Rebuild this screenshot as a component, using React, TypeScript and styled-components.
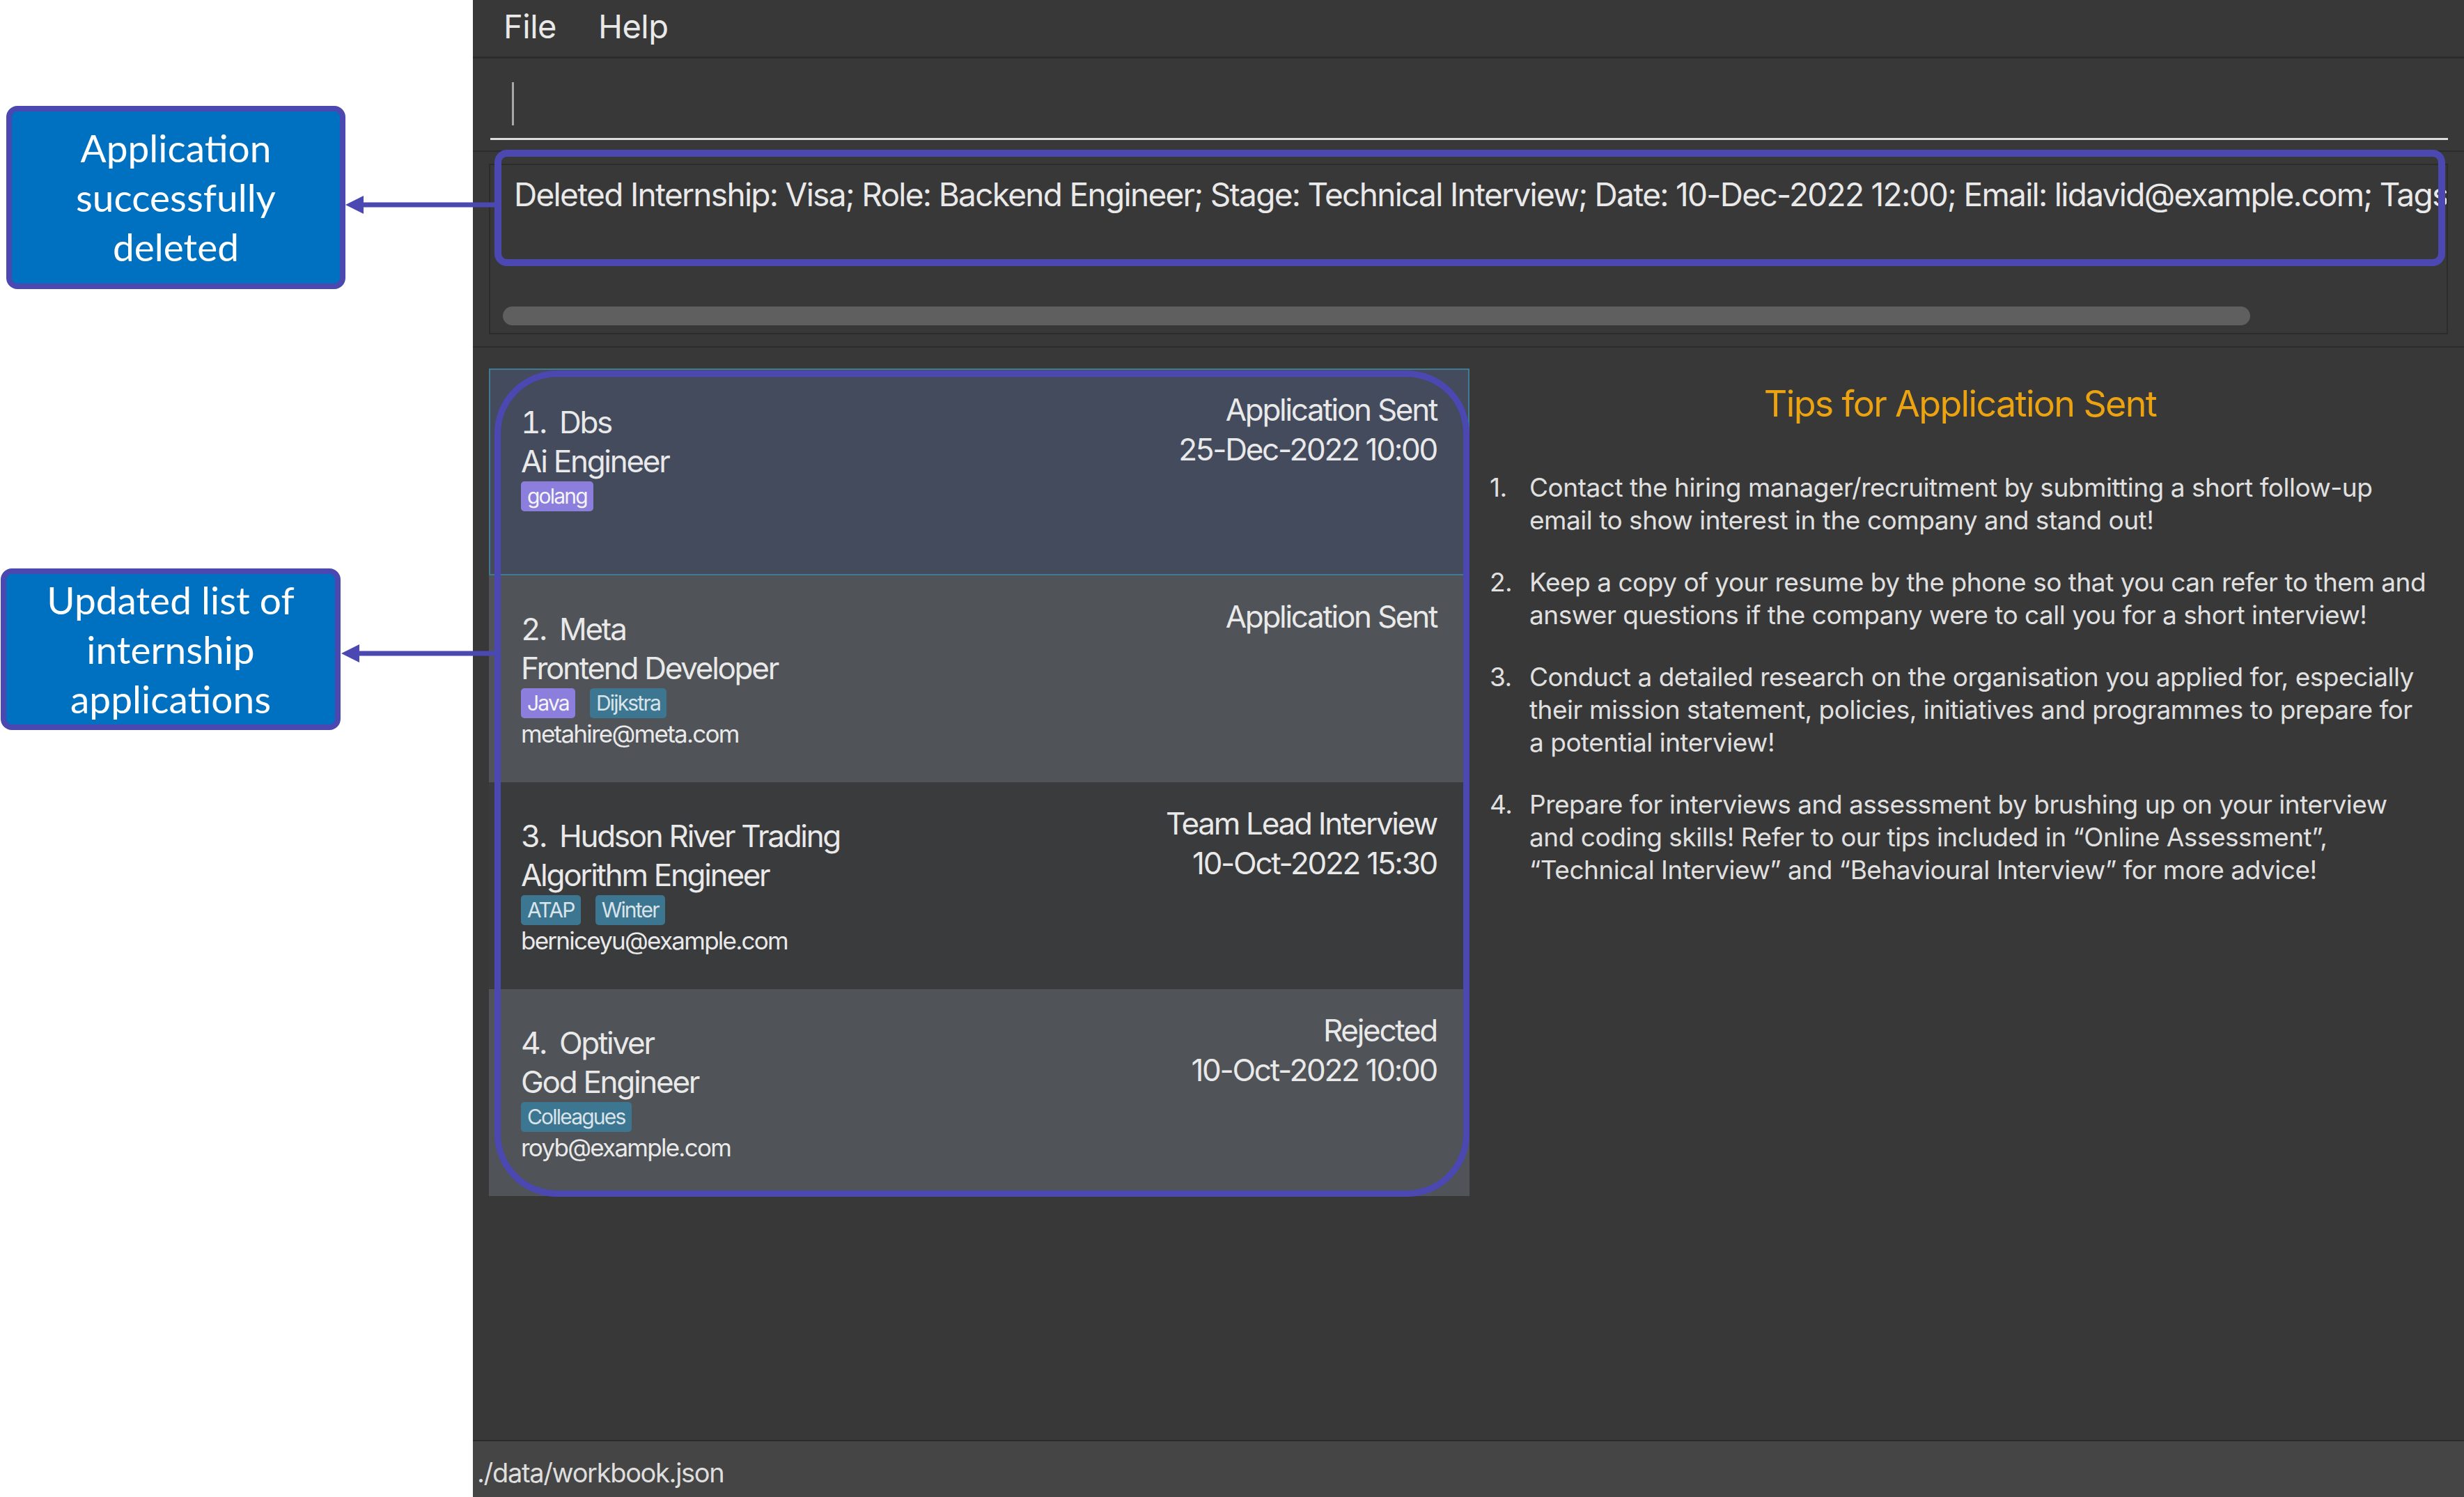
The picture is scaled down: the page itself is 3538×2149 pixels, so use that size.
import React from 'react';
import styled, { createGlobalStyle } from 'styled-components';

const GlobalStyle = createGlobalStyle`
  html, body {
    margin: 0;
    padding: 0;
    background: #ffffff;
  }
  body {
    font-family: Inter, "Liberation Sans", sans-serif;
  }
`;

const Page = styled.div`
  position: relative;
  width: 3538px;
  height: 2149px;
  display: flex;
  background: #ffffff;
  overflow: hidden;
`;

const Gutter = styled.div`
  width: 679px;
  flex-shrink: 0;
`;

const Window = styled.div`
  flex: 1;
  min-width: 0;
  display: flex;
  flex-direction: column;
  background: #383838;
  color: #e9e9e9;
  font-family: Inter, "Liberation Sans", sans-serif;
  letter-spacing: -0.03em;
`;

const MenuBar = styled.div`
  height: 84px;
  box-sizing: border-box;
  display: flex;
  gap: 60px;
  padding: 10px 0 0 44px;
  border-bottom: 3px solid #2c2c2c;
  font-size: 47px;
  line-height: 1.21;
`;

const CommandArea = styled.div`
  height: 134px;
  box-sizing: border-box;
  padding: 0 23px 0 25px;
  border-bottom: 2px solid #2c2c2c;
`;

const CommandField = styled.div`
  height: 117px;
  box-sizing: border-box;
  border-bottom: 3px solid #dcdcdc;
  display: flex;
  align-items: flex-start;
`;

const Caret = styled.span`
  width: 3px;
  height: 62px;
  margin: 34px 0 0 31px;
  background: #a8a8a8;
`;

const ResultArea = styled.div`
  height: 281px;
  box-sizing: border-box;
  padding: 17px 23px 0 23px;
  border-bottom: 2px solid #2c2c2c;
`;

const ResultBox = styled.div`
  height: 245px;
  box-sizing: border-box;
  border: 2px solid #2c2c2c;
  display: flex;
  flex-direction: column;
  justify-content: space-between;
  overflow: hidden;
`;

const ResultText = styled.div`
  padding: 15px 0 0 34px;
  font-size: 46px;
  line-height: 1.21;
  letter-spacing: -0.037em;
  white-space: nowrap;
`;

const ScrollThumb = styled.div`
  width: 2509px;
  height: 27px;
  margin: 0 0 11px 18px;
  border-radius: 14px;
  background: #5f5f5f;
`;

const Main = styled.div`
  flex: 1;
  display: flex;
  padding: 30px 0 0 23px;
  min-height: 0;
`;

const ListPanel = styled.div`
  width: 1408px;
  flex-shrink: 0;
  display: flex;
  flex-direction: column;
`;

const cardBg = {
  selected: '#434b5d',
  even: '#505458',
  odd: '#3a3b3d',
};

const Card = styled.div<{ $tone: keyof typeof cardBg }>`
  height: 297px;
  box-sizing: border-box;
  display: flex;
  justify-content: space-between;
  background: ${(p) => cardBg[p.$tone]};
  border: ${(p) => (p.$tone === 'selected' ? '2px solid #3f7c94' : 'none')};
  padding: ${(p) => (p.$tone === 'selected' ? '29px 45px 0 44px' : '31px 47px 0 46px')};
`;

const LeftCol = styled.div`
  margin-top: 18px;
  display: flex;
  flex-direction: column;
`;

const NameRow = styled.div`
  display: flex;
  font-size: 44px;
  line-height: 56px;
  letter-spacing: -0.052em;
`;

const IdLabel = styled.span`
  min-width: 55px;
  font-variant-numeric: tabular-nums;
`;

const Role = styled.div`
  font-size: 44px;
  line-height: 56px;
  letter-spacing: -0.052em;
`;

const Tags = styled.div`
  display: flex;
  gap: 21px;
  margin-top: 1px;
`;

const tagBg = {
  purple: '#8c7edc',
  teal: '#3d7690',
};

const Tag = styled.span<{ $tone: keyof typeof tagBg }>`
  height: 43px;
  padding: 0 9px;
  border-radius: 5px;
  font-size: 30px;
  line-height: 43px;
  letter-spacing: -0.06em;
  background: ${(p) => tagBg[p.$tone]};
  color: ${(p) => (p.$tone === 'purple' ? '#f4f4f4' : '#d9e4ea')};
`;

const Email = styled.div`
  font-size: 35px;
  line-height: 44px;
  letter-spacing: -0.05em;
`;

const RightCol = styled.div`
  text-align: right;
  font-size: 44px;
  line-height: 57px;
  letter-spacing: -0.052em;
`;

const TipsPanel = styled.div`
  flex: 1;
  min-width: 0;
  padding: 20px 48px 0 29px;
  color: #e0e0e0;
`;

const TipsTitle = styled.div`
  text-align: center;
  font-size: 52px;
  line-height: 1.21;
  letter-spacing: -0.032em;
  color: #eba311;
`;

const TipList = styled.div`
  margin-top: 64px;
  display: flex;
  flex-direction: column;
  gap: 42px;
`;

const TipItem = styled.div`
  display: flex;
  font-size: 37px;
  line-height: 47px;
`;

const TipNum = styled.span`
  width: 57px;
  flex-shrink: 0;
`;

const TipLine = styled.span`
  display: block;
  white-space: nowrap;
`;

const StatusBar = styled.div`
  height: 82px;
  box-sizing: border-box;
  padding: 23px 0 0 6px;
  border-top: 2px solid #2b2b2b;
  background: #454545;
  font-size: 38px;
  line-height: 1.21;
  letter-spacing: -0.035em;
  color: #dedede;
`;

/* annotation layer: callouts, arrows and highlight rings drawn over the screenshot */

const Callout = styled.div<{ $top: number; $left: number; $w: number; $h: number }>`
  position: absolute;
  top: ${(p) => p.$top}px;
  left: ${(p) => p.$left}px;
  width: ${(p) => p.$w}px;
  height: ${(p) => p.$h}px;
  box-sizing: border-box;
  display: flex;
  align-items: center;
  justify-content: center;
  text-align: center;
  background: #0070c0;
  border: 8px solid #4b48b1;
  border-radius: 16px;
  color: #ffffff;
  font-family: Lato, "Open Sans", sans-serif;
  font-size: 55px;
  line-height: 71px;
`;

const Ring = styled.div<{ $top: number; $left: number; $w: number; $h: number; $r: number; $b: number }>`
  position: absolute;
  top: ${(p) => p.$top}px;
  left: ${(p) => p.$left}px;
  width: ${(p) => p.$w}px;
  height: ${(p) => p.$h}px;
  box-sizing: border-box;
  border: ${(p) => p.$b}px solid #4b48b1;
  border-radius: ${(p) => p.$r}px;
  pointer-events: none;
`;

const ArrowSvg = styled.svg<{ $top: number; $left: number }>`
  position: absolute;
  top: ${(p) => p.$top}px;
  left: ${(p) => p.$left}px;
`;

const Arrow = ({ top, left, width }: { top: number; left: number; width: number }) => (
  <ArrowSvg $top={top} $left={left} width={width} height={32} viewBox={`0 0 ${width} 32`}>
    <rect x={24} y={12.5} width={width - 24} height={7} fill="#4b48b1" />
    <polygon points="2,16 28,3 28,29" fill="#4b48b1" />
  </ArrowSvg>
);

type Internship = {
  id: number;
  company: string;
  role: string;
  tags: { label: string; tone: 'purple' | 'teal' }[];
  email?: string;
  status: string;
  date?: string;
  tone: keyof typeof cardBg;
};

const applications: Internship[] = [
  {
    id: 1,
    company: 'Dbs',
    role: 'Ai Engineer',
    tags: [{ label: 'golang', tone: 'purple' }],
    status: 'Application Sent',
    date: '25-Dec-2022 10:00',
    tone: 'selected',
  },
  {
    id: 2,
    company: 'Meta',
    role: 'Frontend Developer',
    tags: [
      { label: 'Java', tone: 'purple' },
      { label: 'Dijkstra', tone: 'teal' },
    ],
    email: 'metahire@meta.com',
    status: 'Application Sent',
    tone: 'even',
  },
  {
    id: 3,
    company: 'Hudson River Trading',
    role: 'Algorithm Engineer',
    tags: [
      { label: 'ATAP', tone: 'teal' },
      { label: 'Winter', tone: 'teal' },
    ],
    email: 'berniceyu@example.com',
    status: 'Team Lead Interview',
    date: '10-Oct-2022 15:30',
    tone: 'odd',
  },
  {
    id: 4,
    company: 'Optiver',
    role: 'God Engineer',
    tags: [{ label: 'Colleagues', tone: 'teal' }],
    email: 'royb@example.com',
    status: 'Rejected',
    date: '10-Oct-2022 10:00',
    tone: 'even',
  },
];

const tips: string[][] = [
  [
    'Contact the hiring manager/recruitment by submitting a short follow-up',
    'email to show interest in the company and stand out!',
  ],
  [
    'Keep a copy of your resume by the phone so that you can refer to them and',
    'answer questions if the company were to call you for a short interview!',
  ],
  [
    'Conduct a detailed research on the organisation you applied for, especially',
    'their mission statement, policies, initiatives and programmes to prepare for',
    'a potential interview!',
  ],
  [
    'Prepare for interviews and assessment by brushing up on your interview',
    'and coding skills! Refer to our tips included in \u201COnline Assessment\u201D,',
    '\u201CTechnical Interview\u201D and \u201CBehavioural Interview\u201D for more advice!',
  ],
];

const result =
  'Deleted Internship: Visa; Role: Backend Engineer; Stage: Technical Interview; Date: 10-Dec-2022 12:00; Email: lidavid@example.com; Tags: [Java]';

const App = () => {
  return (
    <Page>
      <GlobalStyle />
      <Gutter />
      <Window>
        <MenuBar>
          <span>File</span>
          <span>Help</span>
        </MenuBar>
        <CommandArea>
          <CommandField>
            <Caret />
          </CommandField>
        </CommandArea>
        <ResultArea>
          <ResultBox>
            <ResultText>{result}</ResultText>
            <ScrollThumb />
          </ResultBox>
        </ResultArea>
        <Main>
          <ListPanel>
            {applications.map((a) => (
              <Card key={a.id} $tone={a.tone}>
                <LeftCol>
                  <NameRow>
                    <IdLabel>{a.id}.</IdLabel>
                    <span>{a.company}</span>
                  </NameRow>
                  <Role>{a.role}</Role>
                  <Tags>
                    {a.tags.map((t) => (
                      <Tag key={t.label} $tone={t.tone}>
                        {t.label}
                      </Tag>
                    ))}
                  </Tags>
                  {a.email && <Email>{a.email}</Email>}
                </LeftCol>
                <RightCol>
                  <div>{a.status}</div>
                  {a.date && <div>{a.date}</div>}
                </RightCol>
              </Card>
            ))}
          </ListPanel>
          <TipsPanel>
            <TipsTitle>Tips for Application Sent</TipsTitle>
            <TipList>
              {tips.map((lines, i) => (
                <TipItem key={i}>
                  <TipNum>{i + 1}.</TipNum>
                  <div>
                    {lines.map((l) => (
                      <TipLine key={l}>{l}</TipLine>
                    ))}
                  </div>
                </TipItem>
              ))}
            </TipList>
          </TipsPanel>
        </Main>
        <StatusBar>./data/workbook.json</StatusBar>
      </Window>

      <Ring $top={215} $left={710} $w={2801} $h={167} $r={18} $b={10} />
      <Ring $top={532} $left={710} $w={1400} $h={1186} $r={90} $b={9} />
      <Arrow top={278} left={494} width={220} />
      <Arrow top={922} left={488} width={226} />
      <Callout $top={152} $left={9} $w={487} $h={263}>
        <div>
          Application
          <br />
          successfully
          <br />
          deleted
        </div>
      </Callout>
      <Callout $top={816} $left={1} $w={488} $h={232}>
        <div>
          Updated list of
          <br />
          internship
          <br />
          applications
        </div>
      </Callout>
    </Page>
  );
};

export default App;
